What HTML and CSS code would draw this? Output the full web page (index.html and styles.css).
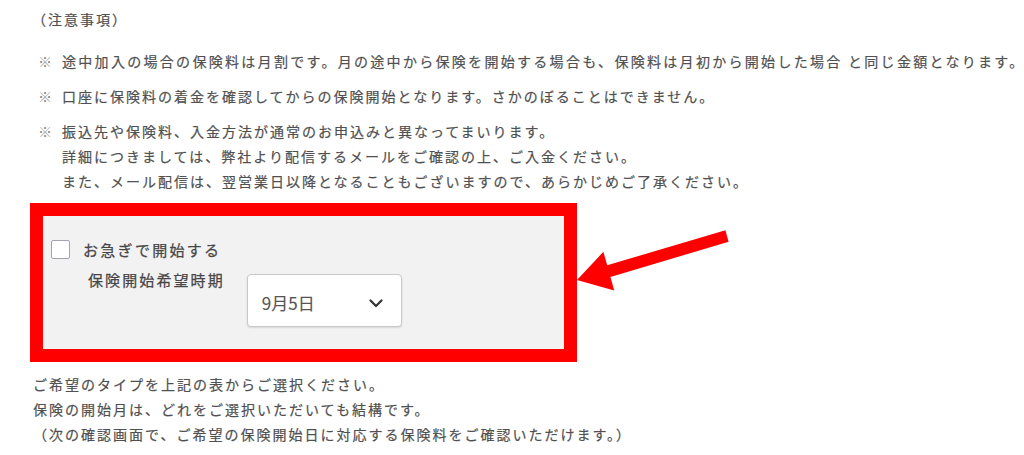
FILE: index.html
```html
<!DOCTYPE html>
<html lang="ja">
<head>
<meta charset="utf-8">
<title>注意事項</title>
<link rel="stylesheet" href="styles.css">
</head>
<body>
<div class="page">
  <p class="title">（注意事項）</p>
  <ul class="notes">
    <li class="wide"><span class="mark">※</span><span class="text">途中加入の場合の保険料は月割です。月の途中から保険を開始する場合も、保険料は月初から開始した場合 と同じ金額となります。</span></li>
    <li><span class="mark">※</span><span class="text">口座に保険料の着金を確認してからの保険開始となります。さかのぼることはできません。</span></li>
    <li><span class="mark">※</span><span class="text">振込先や保険料、入金方法が通常のお申込みと異なってまいります。<br>詳細につきましては、弊社より配信するメールをご確認の上、ご入金ください。<br>また、メール配信は、翌営業日以降となることもございますので、あらかじめご了承ください。</span></li>
  </ul>
  <div class="urgent">
    <label class="check-row"><span class="checkbox"></span><span class="check-label">お急ぎで開始する</span></label>
    <div class="date-row">
      <span class="date-label">保険開始希望時期</span>
      <div class="select">
        <span class="select-value">9月5日</span>
        <svg class="chevron" width="14" height="9" viewBox="0 0 14 9"><path d="M1.5 1.5 L7 7 L12.5 1.5" fill="none" stroke="#333" stroke-width="2.2" stroke-linecap="round" stroke-linejoin="round"/></svg>
      </div>
    </div>
  </div>
  <p class="after">ご希望のタイプを上記の表からご選択ください。<br>保険の開始月は、どれをご選択いただいても結構です。<br>（次の確認画面で、ご希望の保険開始日に対応する保険料をご確認いただけます。）</p>
  <svg class="arrow" width="1024" height="455" viewBox="0 0 1024 455">
    <polygon fill="#ff0000" points="577,280 614.2,290.4 610.4,276.9 728.6,241.8 725.4,230.2 607.2,265.3 603.4,251.8"/>
  </svg>
</div>
</body>
</html>
```

FILE: styles.css
```css
html, body {
  margin: 0;
  background: #ffffff;
}

body {
  font-family: "Noto Sans CJK JP", "Noto Sans", sans-serif;
  color: #505050;
  -webkit-text-stroke: 0.2px #505050;
}

.page {
  position: relative;
  width: 1024px;
  height: 455px;
  box-sizing: border-box;
  padding: 7px 0 0 30px;
  overflow: hidden;
}

.title {
  margin: 0 0 0 2px;
  font-size: 14px;
  line-height: 25px;
  letter-spacing: 2px;
}

.notes {
  list-style: none;
  margin: 17px 0 0 8px;
  padding: 0;
}

.notes li {
  display: flex;
  font-size: 14px;
  line-height: 25px;
  letter-spacing: 2px;
  white-space: nowrap;
  margin-bottom: 10px;
}

.notes li.wide {
  letter-spacing: 2.3px;
}

.notes li:last-child {
  margin-bottom: 0;
}

.mark {
  flex: none;
  width: 24px;
  color: #8a8a8a;
  -webkit-text-stroke: 0;
  letter-spacing: 0;
}

.urgent {
  width: 547px;
  height: 159px;
  box-sizing: border-box;
  margin-top: 9px;
  border: 13px solid #ff0000;
  background: #f2f2f2;
  padding: 24px 0 0 8px;
}

.check-row {
  display: flex;
  align-items: center;
  height: 19px;
}

.checkbox {
  flex: none;
  width: 19px;
  height: 19px;
  box-sizing: border-box;
  border: 1px solid #a3a3b2;
  border-radius: 2px;
  background: #ffffff;
}

.check-label {
  margin-left: 13px;
  font-size: 15px;
  line-height: 20px;
  letter-spacing: 2.3px;
  color: #464646;
  -webkit-text-stroke: 0.25px #464646;
}

.date-row {
  display: flex;
  align-items: flex-start;
  margin-top: 11px;
}

.date-label {
  margin-left: 37px;
  font-size: 15px;
  line-height: 20px;
  letter-spacing: 2.1px;
  color: #464646;
  -webkit-text-stroke: 0.25px #464646;
}

.select {
  display: flex;
  align-items: center;
  justify-content: space-between;
  width: 155px;
  height: 53px;
  box-sizing: border-box;
  margin: 4px 0 0 22px;
  padding: 5px 18px 0 14px;
  background: #ffffff;
  border: 1px solid #c9c9cc;
  border-radius: 4px;
  box-shadow: 0 1px 2px rgba(0, 0, 0, 0.12);
}

.select-value {
  font-size: 17px;
  line-height: 24px;
  color: #555555;
  -webkit-text-stroke: 0.1px #555555;
}

.chevron {
  display: block;
}

.after {
  margin: 10px 0 0 3px;
  font-size: 14px;
  line-height: 25px;
  letter-spacing: 2px;
  white-space: nowrap;
}

.arrow {
  position: absolute;
  top: 0;
  left: 0;
  pointer-events: none;
}
```
